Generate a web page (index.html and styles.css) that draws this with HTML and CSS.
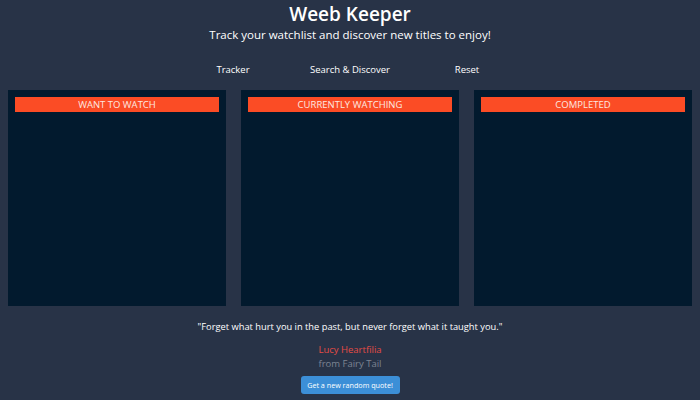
FILE: index.html
```html
<!DOCTYPE html>
<html>
<head>
<meta charset="utf-8">
<link rel="stylesheet" href="styles.css">
</head>
<body>
<header class="hero">
  <h1 class="title">Weeb Keeper</h1>
  <p class="subtitle">Track your watchlist and discover new titles to enjoy!</p>
</header>
<nav class="nav">
  <a class="nav-link">Tracker</a>
  <a class="nav-link">Search &amp; Discover</a>
  <a class="nav-link">Reset</a>
</nav>
<main class="board">
  <section class="column"><div class="col-head">WANT TO WATCH</div></section>
  <section class="column"><div class="col-head">CURRENTLY WATCHING</div></section>
  <section class="column"><div class="col-head">COMPLETED</div></section>
</main>
<footer class="quote">
  <p class="quote-text">"Forget what hurt you in the past, but never forget what it taught you."</p>
  <p class="quote-name">Lucy Heartfilia</p>
  <p class="quote-from">from Fairy Tail</p>
  <button class="quote-btn">Get a new random quote!</button>
</footer>
</body>
</html>
```
FILE: styles.css
```css
html, body {
  margin: 0;
  padding: 0;
}
body {
  background: #283347;
  color: #ffffff;
  font-family: "Open Sans", "Noto Sans", sans-serif;
  padding: 0 8px;
  height: 400px;
  overflow: hidden;
}
.hero {
  text-align: center;
  padding-top: 1px;
}
.title {
  margin: 0;
  font-size: 19px;
  font-weight: 600;
  line-height: 26px;
}
.subtitle {
  margin: 0;
  font-size: 11.5px;
  line-height: 15px;
}
.nav {
  display: flex;
  justify-content: center;
  margin-top: 20px;
  height: 16px;
  font-size: 9.5px;
  line-height: 16px;
}
.nav-link {
  width: 117px;
  text-align: center;
  color: #fff;
}
.board {
  display: grid;
  grid-template-columns: repeat(3, 1fr);
  gap: 15px;
  margin-top: 12px;
}
.column {
  background: #021a2e;
  height: 216px;
  padding: 7px;
  box-sizing: border-box;
}
.col-head {
  background: #fb4c25;
  height: 15px;
  line-height: 15px;
  text-align: center;
  font-size: 9.5px;
  color: #fde8e0;
}
.quote {
  text-align: center;
  margin-top: 14px;
}
.quote-text {
  margin: 0;
  font-size: 9.3px;
  line-height: 14px;
}
.quote-name {
  margin: 9px 0 0;
  font-size: 9.5px;
  line-height: 14px;
  color: #e44b45;
}
.quote-from {
  margin: 0;
  font-size: 9.5px;
  line-height: 14px;
  color: #7d8593;
}
.quote-btn {
  margin-top: 4px;
  background: #3c8fd7;
  color: #fff;
  border: none;
  border-radius: 3px;
  font-family: inherit;
  font-size: 7.2px;
  width: 99px;
  height: 18px;
  padding: 0;
}
```
